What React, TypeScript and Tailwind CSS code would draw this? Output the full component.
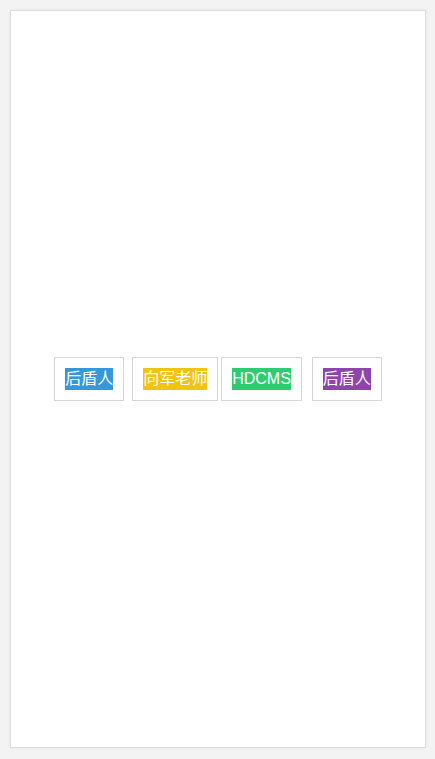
const tags = [
  { text: "后盾人", bg: "bg-[#3498db]", mr: "mr-[8px]" },
  { text: "向军老师", bg: "bg-[#f1c40f]", mr: "mr-[3px]" },
  { text: "HDCMS", bg: "bg-[#2ecc71]", mr: "mr-[10px]" },
  { text: "后盾人", bg: "bg-[#8e44ad]", mr: "" },
];

export default function App() {
  return (
    <div className="w-[435px] h-[759px] bg-[#f3f3f3] p-[10px] font-['Liberation_Sans','Noto_Sans_CJK_SC',sans-serif]">
      <div className="h-[738px] w-[416px] bg-white border border-[#dcdcdc] shadow-[0_0_3px_rgba(0,0,0,0.06)] flex items-center justify-center">
        <div className="flex items-center">
          {tags.map((tag, i) => (
            <div key={i} className={`border border-[#d6d6d6] px-[10px] py-[10px] ${tag.mr}`}>
              <span className={`${tag.bg} text-white text-[16px] leading-[22px] block`}>{tag.text}</span>
            </div>
          ))}
        </div>
      </div>
    </div>
  );
}
